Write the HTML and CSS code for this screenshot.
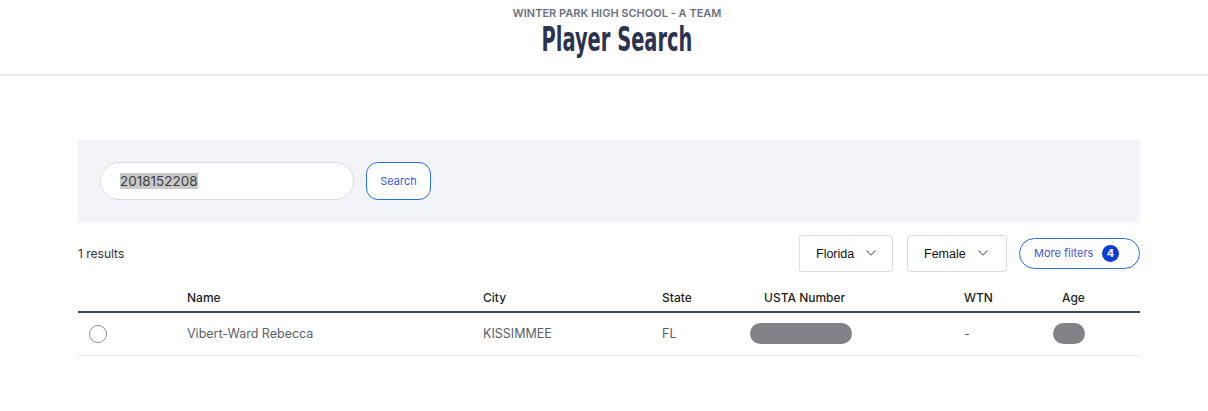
FILE: index.html
```html
<!DOCTYPE html>
<html lang="en">
<head>
<meta charset="utf-8">
<title>Player Search</title>
<link rel="stylesheet" href="styles.css">
</head>
<body>
<header class="page-header">
  <div class="team-name">WINTER PARK HIGH SCHOOL - A TEAM</div>
  <h1 class="page-title">Player Search</h1>
</header>

<main class="content">
  <section class="search-panel">
    <div class="search-input"><span class="selected-text">2018152208</span></div>
    <button class="search-btn" type="button">Search</button>
  </section>

  <section class="toolbar">
    <div class="result-count">1 results</div>
    <div class="filters">
      <div class="select select-state">
        <span>Florida</span>
        <svg class="chev" width="10" height="6" viewBox="0 0 10 6"><path d="M0.5 0.5 L5 5 L9.5 0.5" fill="none" stroke="#7a7d86" stroke-width="1.1"/></svg>
      </div>
      <div class="select select-gender">
        <span>Female</span>
        <svg class="chev" width="10" height="6" viewBox="0 0 10 6"><path d="M0.5 0.5 L5 5 L9.5 0.5" fill="none" stroke="#7a7d86" stroke-width="1.1"/></svg>
      </div>
      <button class="more-filters" type="button">More filters <span class="badge">4</span></button>
    </div>
  </section>

  <table class="results">
    <thead>
      <tr>
        <th class="c-sel"></th>
        <th class="c-name">Name</th>
        <th class="c-city">City</th>
        <th class="c-state">State</th>
        <th class="c-usta">USTA Number</th>
        <th class="c-wtn">WTN</th>
        <th class="c-age">Age</th>
      </tr>
    </thead>
    <tbody>
      <tr>
        <td class="c-sel"><span class="radio"></span></td>
        <td>Vibert-Ward Rebecca</td>
        <td>KISSIMMEE</td>
        <td>FL</td>
        <td><span class="redact redact-usta"></span></td>
        <td>-</td>
        <td><span class="redact redact-age"></span></td>
      </tr>
    </tbody>
  </table>
</main>
</body>
</html>
```

FILE: styles.css
```css
* { box-sizing: border-box; }

html, body {
  margin: 0;
  padding: 0;
  background: #ffffff;
  font-family: Inter, "Noto Sans", "Liberation Sans", sans-serif;
  color: #333;
}

.page-header {
  height: 76px;
  border-bottom: 2px solid #e7e7ec;
  text-align: center;
  padding: 7px 0 0 26px;
}

.team-name {
  font-size: 11px;
  font-weight: 600;
  color: #6d7080;
  line-height: 13px;
}

.page-title {
  margin: 2px 0 0;
  font-family: "DejaVu Sans Condensed", "Liberation Sans", sans-serif;
  font-weight: 700;
  font-size: 27px;
  line-height: 30px;
  color: #2c3350;
  transform: scale(0.8, 1.22);
  transform-origin: 50% 0;
}

.content {
  margin: 64px 0 0 78px;
  width: 1062px;
}

.search-panel {
  background: #f3f4f8;
  height: 83px;
  padding: 22px 0 0 22px;
  display: flex;
  align-items: flex-start;
  gap: 12px;
}

.search-input {
  width: 254px;
  height: 38px;
  background: #fff;
  border: 1px solid #dcdde2;
  border-radius: 19px;
  display: flex;
  align-items: center;
  padding-left: 19px;
  font-size: 13.5px;
  color: #3d3d3d;
}

.selected-text {
  background: #c9c9c9;
  line-height: 16px;
}

.search-btn {
  width: 65px;
  height: 38px;
  background: #fff;
  border: 1px solid #2c6de0;
  border-radius: 12px;
  font-family: Inter, "Noto Sans", sans-serif;
  font-size: 11px;
  color: #3b58d4;
  padding: 0;
  cursor: pointer;
}

.toolbar {
  display: flex;
  justify-content: space-between;
  align-items: center;
  height: 60px;
}

.result-count {
  font-size: 12px;
  color: #333;
}

.filters {
  display: flex;
  align-items: center;
  gap: 12px;
}

.select {
  height: 37px;
  border: 1px solid #dcdde3;
  border-radius: 3px;
  display: flex;
  align-items: center;
  gap: 12px;
  padding: 2px 0 0 16px;
  font-family: "Liberation Sans", Arial, sans-serif;
  font-size: 12.5px;
  color: #111;
}

.select-state { width: 94px; }
.select-gender { width: 100px; margin-left: 2px; }

.chev { margin-top: -3px; }

.more-filters {
  width: 121px;
  height: 31px;
  background: #fff;
  border: 1px solid #2c6de0;
  border-radius: 16px;
  display: flex;
  align-items: center;
  justify-content: space-between;
  padding: 0 20px 0 14px;
  font-family: Inter, "Noto Sans", sans-serif;
  font-size: 11px;
  color: #4a55cf;
  cursor: pointer;
}

.badge {
  width: 17px;
  height: 17px;
  border-radius: 50%;
  background: #0a3ed3;
  color: #fff;
  font-weight: 700;
  font-size: 11px;
  display: flex;
  align-items: center;
  justify-content: center;
}

.results {
  width: 100%;
  border-collapse: collapse;
  table-layout: fixed;
  margin-top: 1px;
}

.results th {
  text-align: left;
  font-size: 12px;
  font-weight: 500;
  color: #1f1f24;
  height: 28px;
  padding: 0 0 6px 11px;
  vertical-align: bottom;
  border-bottom: 2px solid #3f4556;
}

.results td {
  font-size: 12.5px;
  color: #5a5f6c;
  height: 43px;
  padding: 0 0 0 11px;
  border-bottom: 1px solid #e6e7ec;
}

.c-sel { width: 98px; }
.c-name { width: 296px; }
.c-city { width: 179px; }
.c-state { width: 102px; }
.c-usta { width: 200px; }
.c-wtn { width: 98px; }
.c-age { width: 89px; }

.radio {
  display: block;
  width: 18px;
  height: 18px;
  border: 1px solid #8d8f96;
  border-radius: 50%;
  background: #fff;
}

.redact {
  display: block;
  height: 21px;
  background: #828387;
  border-radius: 11px;
}

.redact-usta { width: 102px; margin-left: -14px; }
.redact-age { width: 32px; margin-left: -9px; }
```
